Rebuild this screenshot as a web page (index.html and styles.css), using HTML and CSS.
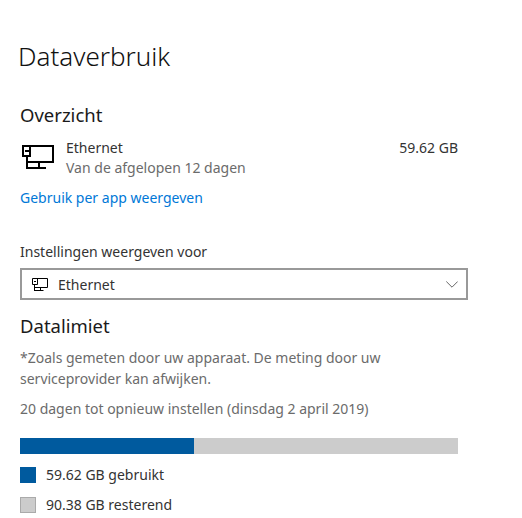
FILE: index.html
```html
<!DOCTYPE html>
<html lang="nl">
<head>
<meta charset="utf-8">
<title>Dataverbruik</title>
<link rel="stylesheet" href="styles.css">
</head>
<body>
<main class="page">
  <h1 class="title">Dataverbruik</h1>
  <h2 class="heading overview">Overzicht</h2>
  <div class="usage">
    <svg class="net-large" width="32" height="25" viewBox="0 0 32 25" fill="none" stroke="#000" stroke-width="2">
      <path d="M8 1H31V17H5"/>
      <path d="M5 11V24M4 23H24M17 17V23"/>
      <path d="M1 1H8V11H1Z"/>
      <path d="M3 5H7V7H3Z" fill="#000" stroke="none"/>
    </svg>
    <div class="usage-text">
      <div class="usage-name">Ethernet</div>
      <div class="usage-sub">Van de afgelopen 12 dagen</div>
    </div>
    <div class="usage-value">59.62 GB</div>
  </div>
  <a class="link" href="#">Gebruik per app weergeven</a>
  <div class="label">Instellingen weergeven voor</div>
  <div class="select">
    <svg class="net-small" width="16" height="13" viewBox="0 0 16 13" fill="none" stroke="#000" stroke-width="1">
      <path d="M5 .5H15.5V9.5H2.5"/>
      <path d="M2.5 6V13M2 12.5H11.5M8.5 9.5V12.5"/>
      <path d="M.5 .5H5.5V6.5H.5Z"/>
      <path d="M2 3H4V4H2Z" fill="#000" stroke="none"/>
    </svg>
    <span class="select-text">Ethernet</span>
    <svg class="chevron" width="12" height="7" viewBox="0 0 12 7" fill="none" stroke="#666" stroke-width="1">
      <path d="M.3 .5L6 6.2L11.7 .5"/>
    </svg>
  </div>
  <h2 class="heading limit">Datalimiet</h2>
  <p class="note">*Zoals gemeten door uw apparaat. De meting door uw<br>serviceprovider kan afwijken.</p>
  <p class="reset">20 dagen tot opnieuw instellen (dinsdag 2 april 2019)</p>
  <div class="bar"><div class="bar-fill" style="width:39.7%"></div></div>
  <div class="legend">
    <div class="legend-row"><span class="swatch swatch-used"></span>59.62 GB gebruikt</div>
    <div class="legend-row"><span class="swatch swatch-left"></span>90.38 GB resterend</div>
  </div>
</main>
</body>
</html>
```
FILE: styles.css
```css
* { box-sizing: border-box; }
html, body { margin: 0; padding: 0; background: #fff; }
body {
  font-family: "Noto Sans", "Open Sans", sans-serif;
  font-size: 14px;
  color: #333;
  overflow: hidden;
  height: 518px;
}
.page { padding: 37px 0 0 20px; width: 522px; }
.title { margin: 0 0 0 -2px; font-size: 26px; line-height: 38px; font-weight: 300; color: #111; }
.heading { margin: 0; font-size: 18.5px; line-height: 26px; font-weight: 400; color: #1a1a1a; }
.overview { margin-top: 27px; }
.usage { display: flex; width: 438px; margin-top: 10px; }
.net-large { margin: 7px 0 0 2px; flex: none; }
.usage-text { margin-left: 12px; flex: 1; }
.usage-name { line-height: 20px; }
.usage-sub { line-height: 20px; color: #6b6b6b; }
.usage-value { line-height: 20px; }
.link { display: block; margin-top: 10px; line-height: 20px; color: #0078d7; text-decoration: none; }
.label { margin-top: 34px; line-height: 20px; }
.select {
  display: flex; align-items: center;
  width: 448px; height: 32px; margin-top: 6px; padding: 0 8px 0 10px;
  border: 2px solid #999;
}
.select-text { margin-left: 10px; flex: 1; }
.chevron { flex: none; margin-top: 1px; }
.limit { margin-top: 13px; }
.note { margin: 8px 0 0; line-height: 21px; color: #6b6b6b; }
.reset { margin: 10px 0 0; line-height: 20px; color: #6b6b6b; }
.bar { width: 438px; height: 16px; margin-top: 19px; background: #ccc; }
.bar-fill { height: 100%; background: #005a9e; }
.legend { margin-top: 11px; display: flex; flex-direction: column; gap: 10px; }
.legend-row { display: flex; align-items: center; gap: 10px; line-height: 20px; }
.swatch { width: 16px; height: 16px; flex: none; }
.swatch-used { background: #005a9e; }
.swatch-left { background: #ccc; border: 1px solid #aaa; }
```
